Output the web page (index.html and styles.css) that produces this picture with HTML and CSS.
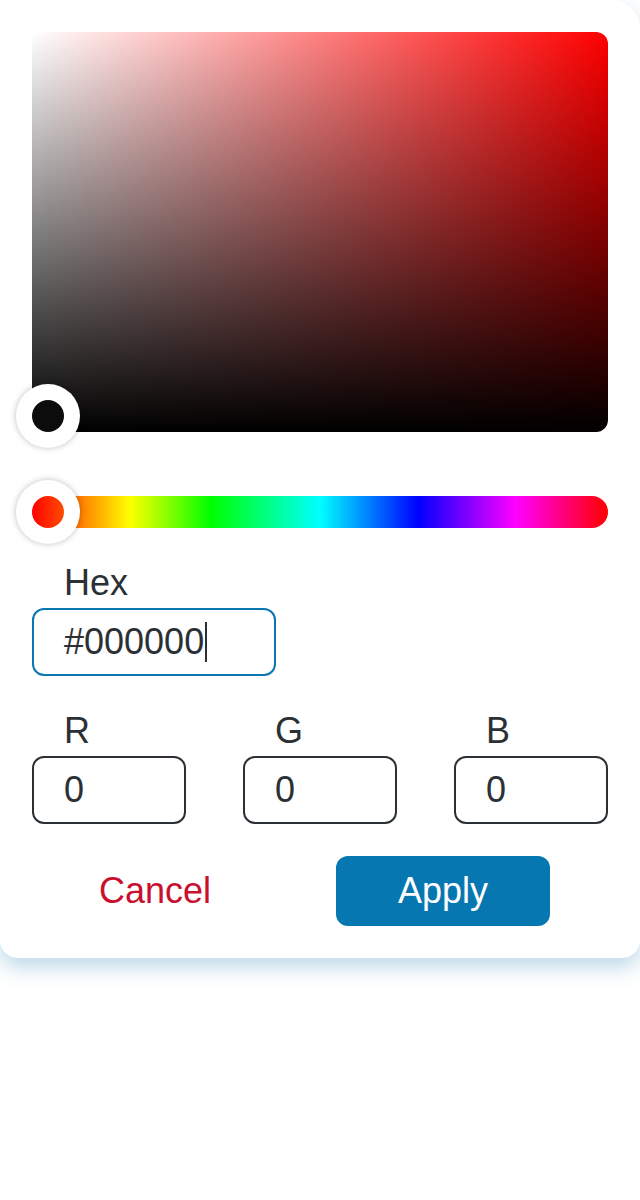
FILE: index.html
```html
<!DOCTYPE html>
<html lang="en">
<head>
  <meta charset="UTF-8">
  <meta name="viewport" content="width=device-width, initial-scale=1.0">
  <title>Color Picker</title>
  <link rel="stylesheet" href="styles.css">
</head>
<body>
  <div class="picker">
    <div class="sv-area">
      <span class="thumb sv-thumb"><span class="dot dot-black"></span></span>
    </div>

    <div class="hue-bar">
      <span class="thumb hue-thumb"><span class="dot dot-red"></span></span>
    </div>

    <div class="field">
      <label class="field-label">Hex</label>
      <div class="input hex-input">#000000<span class="caret"></span></div>
    </div>

    <div class="rgb-row">
      <div class="field">
        <label class="field-label">R</label>
        <div class="input">0</div>
      </div>
      <div class="field">
        <label class="field-label">G</label>
        <div class="input">0</div>
      </div>
      <div class="field">
        <label class="field-label">B</label>
        <div class="input">0</div>
      </div>
    </div>

    <div class="actions">
      <button type="button" class="btn btn-cancel">Cancel</button>
      <button type="button" class="btn btn-apply">Apply</button>
    </div>
  </div>
</body>
</html>
```

FILE: styles.css
```css
body {
  margin: 0;
  padding-bottom: 60px;
  background-color: #fff;
  font-family: "Liberation Sans", Arial, sans-serif;
  color: #2b3035;
}

.picker {
  background-color: #fff;
  border-radius: 0 28px 18px 18px;
  box-shadow: 0 10px 20px rgba(0, 110, 170, 0.25);
  padding: 32px;
  display: flex;
  flex-direction: column;
}

.sv-area {
  position: relative;
  height: 400px;
  border-radius: 12px;
  background:
    linear-gradient(to top, #000, rgba(0, 0, 0, 0)),
    linear-gradient(to right, #fff, #f00);
}

.hue-bar {
  position: relative;
  height: 32px;
  margin-top: 64px;
  border-radius: 16px;
  background: linear-gradient(to right, #f00 0%, #ff0 17%, #0f0 31%, #0ff 50%, #00f 67%, #f0f 84%, #f00 100%);
}

.thumb {
  position: absolute;
  width: 64px;
  height: 64px;
  border-radius: 50%;
  background-color: #fff;
  box-shadow: 0 0 6px rgba(0, 0, 0, 0.25);
  display: flex;
  align-items: center;
  justify-content: center;
}

.sv-thumb {
  left: -16px;
  bottom: -16px;
}

.hue-thumb {
  left: -16px;
  top: -16px;
}

.dot {
  width: 32px;
  height: 32px;
  border-radius: 50%;
}

.dot-black {
  background-color: #0c0c0c;
}

.dot-red {
  background: linear-gradient(to right, #ff0000, #ff4d00);
}

.field {
  display: flex;
  flex-direction: column;
  margin-top: 35px;
}

.field-label {
  font-size: 36px;
  line-height: 40px;
  padding-left: 32px;
  margin-bottom: 5px;
}

.input {
  box-sizing: border-box;
  height: 68px;
  border: 2px solid #2b3035;
  border-radius: 12px;
  padding-left: 30px;
  font-size: 36px;
  display: flex;
  align-items: center;
}

.hex-input {
  width: 244px;
  border-color: #0a77b0;
}

.caret {
  display: inline-block;
  width: 2px;
  height: 40px;
  margin-left: 1px;
  background-color: #2b3035;
}

.rgb-row {
  display: grid;
  grid-template-columns: 154px 154px 154px;
  justify-content: space-between;
}

.actions {
  display: flex;
  gap: 74px;
  margin-top: 32px;
  padding-left: 16px;
}

.btn {
  width: 214px;
  height: 70px;
  border: none;
  border-radius: 12px;
  font-family: "Liberation Sans", Arial, sans-serif;
  font-size: 36px;
  cursor: pointer;
}

.btn-cancel {
  background: none;
  color: #c8102e;
}

.btn-apply {
  background-color: #0677b1;
  color: #fff;
}
```
